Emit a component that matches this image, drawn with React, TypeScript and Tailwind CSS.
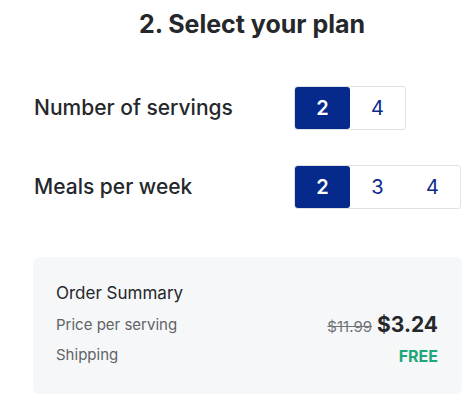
import { useState } from "react";

const servingsOptions = [2, 4];
const mealsOptions = [2, 3, 4];

const Toggle = ({ options, value, onChange }: { options: number[]; value: number; onChange: (v: number) => void }) => {
    return (
        <div className="flex rounded-[3px] border border-[#dfe2e6] bg-white">
            {options.map((opt) => (
                <button
                    key={opt}
                    onClick={() => onChange(opt)}
                    className={`w-[55px] h-[42px] flex items-center justify-center text-[20px] rounded-[3px] ${opt === value ? "bg-[#062a8b] text-white font-semibold" : "text-[#0b2a8c] font-normal"}`}
                >
                    {opt}
                </button>
            ))}
        </div>
    );
};

const App = () => {
    const [servings, setServings] = useState(2);
    const [meals, setMeals] = useState(2);

    return (
        <div className="w-[474px] h-[404px] bg-white text-[#25282b] font-['Inter','Noto_Sans',sans-serif]">
            <div className="pl-[33px] pr-[12px] pt-[8px]">
                <h1 className="text-center pl-[9px] text-[25px] font-bold leading-[33px]">2. Select your plan</h1>

                <div className="mt-[45px] flex items-center">
                    <span className="w-[261px] shrink-0 pl-[1px] text-[21px] font-medium">Number of servings</span>
                    <Toggle options={servingsOptions} value={servings} onChange={setServings} />
                </div>

                <div className="mt-[35px] flex items-center">
                    <span className="w-[261px] shrink-0 pl-[1px] text-[21px] font-medium">Meals per week</span>
                    <Toggle options={mealsOptions} value={meals} onChange={setMeals} />
                </div>

                <div className="mt-[48px] h-[137px] rounded-[6px] bg-[#f6f7f9] pl-[23px] pr-[24px] pt-[23px]">
                    <div className="text-[17px] leading-[26px]">Order Summary</div>
                    <div className="mt-[3px] flex items-center justify-between">
                        <span className="text-[15px] text-[#5f6367]">Price per serving</span>
                        <span className="flex items-baseline gap-[5px]">
                            <span className="text-[15px] text-[#707377] line-through">$11.99</span>
                            <span className="text-[21px] font-bold">$3.24</span>
                        </span>
                    </div>
                    <div className="mt-[3px] flex items-center justify-between">
                        <span className="text-[15px] text-[#5f6367]">Shipping</span>
                        <span className="text-[16px] font-bold text-[#1fa679]">FREE</span>
                    </div>
                </div>
            </div>
        </div>
    );
};

export default App;
